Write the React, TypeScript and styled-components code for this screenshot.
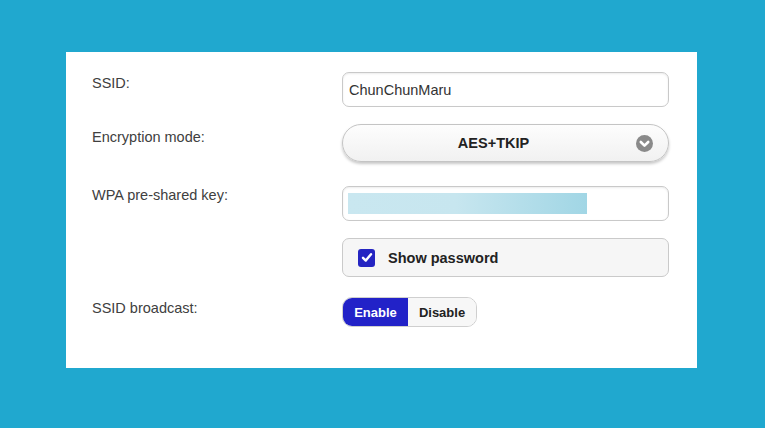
import styled, { createGlobalStyle } from 'styled-components';

const GlobalStyle = createGlobalStyle`
  html, body {
    margin: 0;
    padding: 0;
    background: #20a8cf;
  }
  body {
    font-family: "Liberation Sans", Arial, sans-serif;
  }
`;

const Page = styled.div`
  width: 765px;
  height: 428px;
  padding: 52px 0 0 66px;
  box-sizing: border-box;
`;

const Panel = styled.div`
  width: 631px;
  height: 316px;
  background: #ffffff;
  padding: 20px 28px 0 26px;
  box-sizing: border-box;
  display: flex;
  flex-direction: column;
`;

const Row = styled.div<{ $gap: number }>`
  display: grid;
  grid-template-columns: 250px 327px;
  align-items: start;
  margin-top: ${(p) => p.$gap}px;
`;

const Label = styled.div<{ $offset: number }>`
  font-size: 14.5px;
  line-height: 17px;
  color: #404040;
  padding-top: ${(p) => p.$offset}px;
`;

const TextInput = styled.div`
  height: 35px;
  border: 1px solid #c9c9c9;
  border-radius: 7px;
  box-sizing: border-box;
  background: #fff;
  box-shadow: inset 0 1px 2px rgba(0, 0, 0, 0.08);
  display: flex;
  align-items: center;
  padding: 0 6px;
  font-size: 14.5px;
  color: #333;
`;

const KeyBar = styled.div`
  width: 239px;
  height: 21px;
  background: linear-gradient(90deg, #c9e7f0 0%, #c7e6ef 45%, #a1d6e5 100%);
  margin-left: -1px;
`;

const Select = styled.div`
  height: 38px;
  border: 1px solid #c4c4c4;
  border-radius: 19px;
  box-sizing: border-box;
  background: linear-gradient(#fdfdfd, #f1f1f1);
  box-shadow: 0 2px 3px rgba(0, 0, 0, 0.22);
  position: relative;
  display: flex;
  align-items: center;
  justify-content: center;
  padding-right: 24px;
  font-size: 14.5px;
  font-weight: bold;
  color: #222;
`;

const Chevron = styled.span`
  position: absolute;
  right: 15px;
  top: 10px;
  width: 17px;
  height: 17px;
  display: flex;
`;

const CheckRow = styled.label`
  height: 39px;
  border: 1px solid #cacaca;
  border-radius: 7px;
  box-sizing: border-box;
  background: #f6f6f6;
  display: flex;
  align-items: center;
  padding-left: 15px;
  gap: 13px;
  font-size: 14.5px;
  font-weight: bold;
  color: #222;
`;

const CheckBox = styled.span`
  width: 17px;
  height: 18px;
  border-radius: 3px;
  background: #2525c2;
  display: flex;
  align-items: center;
  justify-content: center;
`;

const Toggle = styled.div`
  display: flex;
  width: 135px;
  height: 30px;
  border: 1px solid #cfcfcf;
  border-radius: 10px;
  box-sizing: border-box;
  overflow: hidden;
`;

const ToggleButton = styled.div<{ $active?: boolean }>`
  flex: ${(p) => (p.$active ? '0 0 65px' : '1 1 auto')};
  display: flex;
  align-items: center;
  justify-content: center;
  font-size: 13px;
  font-weight: bold;
  color: ${(p) => (p.$active ? '#fff' : '#222')};
  background: ${(p) => (p.$active ? '#2222c8' : '#f7f7f7')};
`;

const App = () => {
  return (
    <>
      <GlobalStyle />
      <Page>
        <Panel>
          <Row $gap={0}>
            <Label $offset={3}>SSID:</Label>
            <TextInput>ChunChunMaru</TextInput>
          </Row>
          <Row $gap={17}>
            <Label $offset={5}>Encryption mode:</Label>
            <Select>
              AES+TKIP
              <Chevron>
                <svg width="17" height="17" viewBox="0 0 17 17">
                  <circle cx="8.5" cy="8.5" r="8.5" fill="#8a8a8a" />
                  <path d="M4.8 7 L8.5 10.6 L12.2 7" fill="none" stroke="#fff" strokeWidth="2.6" strokeLinecap="round" strokeLinejoin="round" />
                </svg>
              </Chevron>
            </Select>
          </Row>
          <Row $gap={24}>
            <Label $offset={1}>WPA pre-shared key:</Label>
            <TextInput>
              <KeyBar />
            </TextInput>
          </Row>
          <Row $gap={17}>
            <div />
            <CheckRow>
              <CheckBox>
                <svg width="12" height="11" viewBox="0 0 12 11">
                  <path d="M2 5.8 L4.8 8.6 L10 2.2" fill="none" stroke="#fff" strokeWidth="2.4" strokeLinecap="round" strokeLinejoin="round" />
                </svg>
              </CheckBox>
              Show password
            </CheckRow>
          </Row>
          <Row $gap={20}>
            <Label $offset={3}>SSID broadcast:</Label>
            <Toggle>
              <ToggleButton $active>Enable</ToggleButton>
              <ToggleButton>Disable</ToggleButton>
            </Toggle>
          </Row>
        </Panel>
      </Page>
    </>
  );
};

export default App;
